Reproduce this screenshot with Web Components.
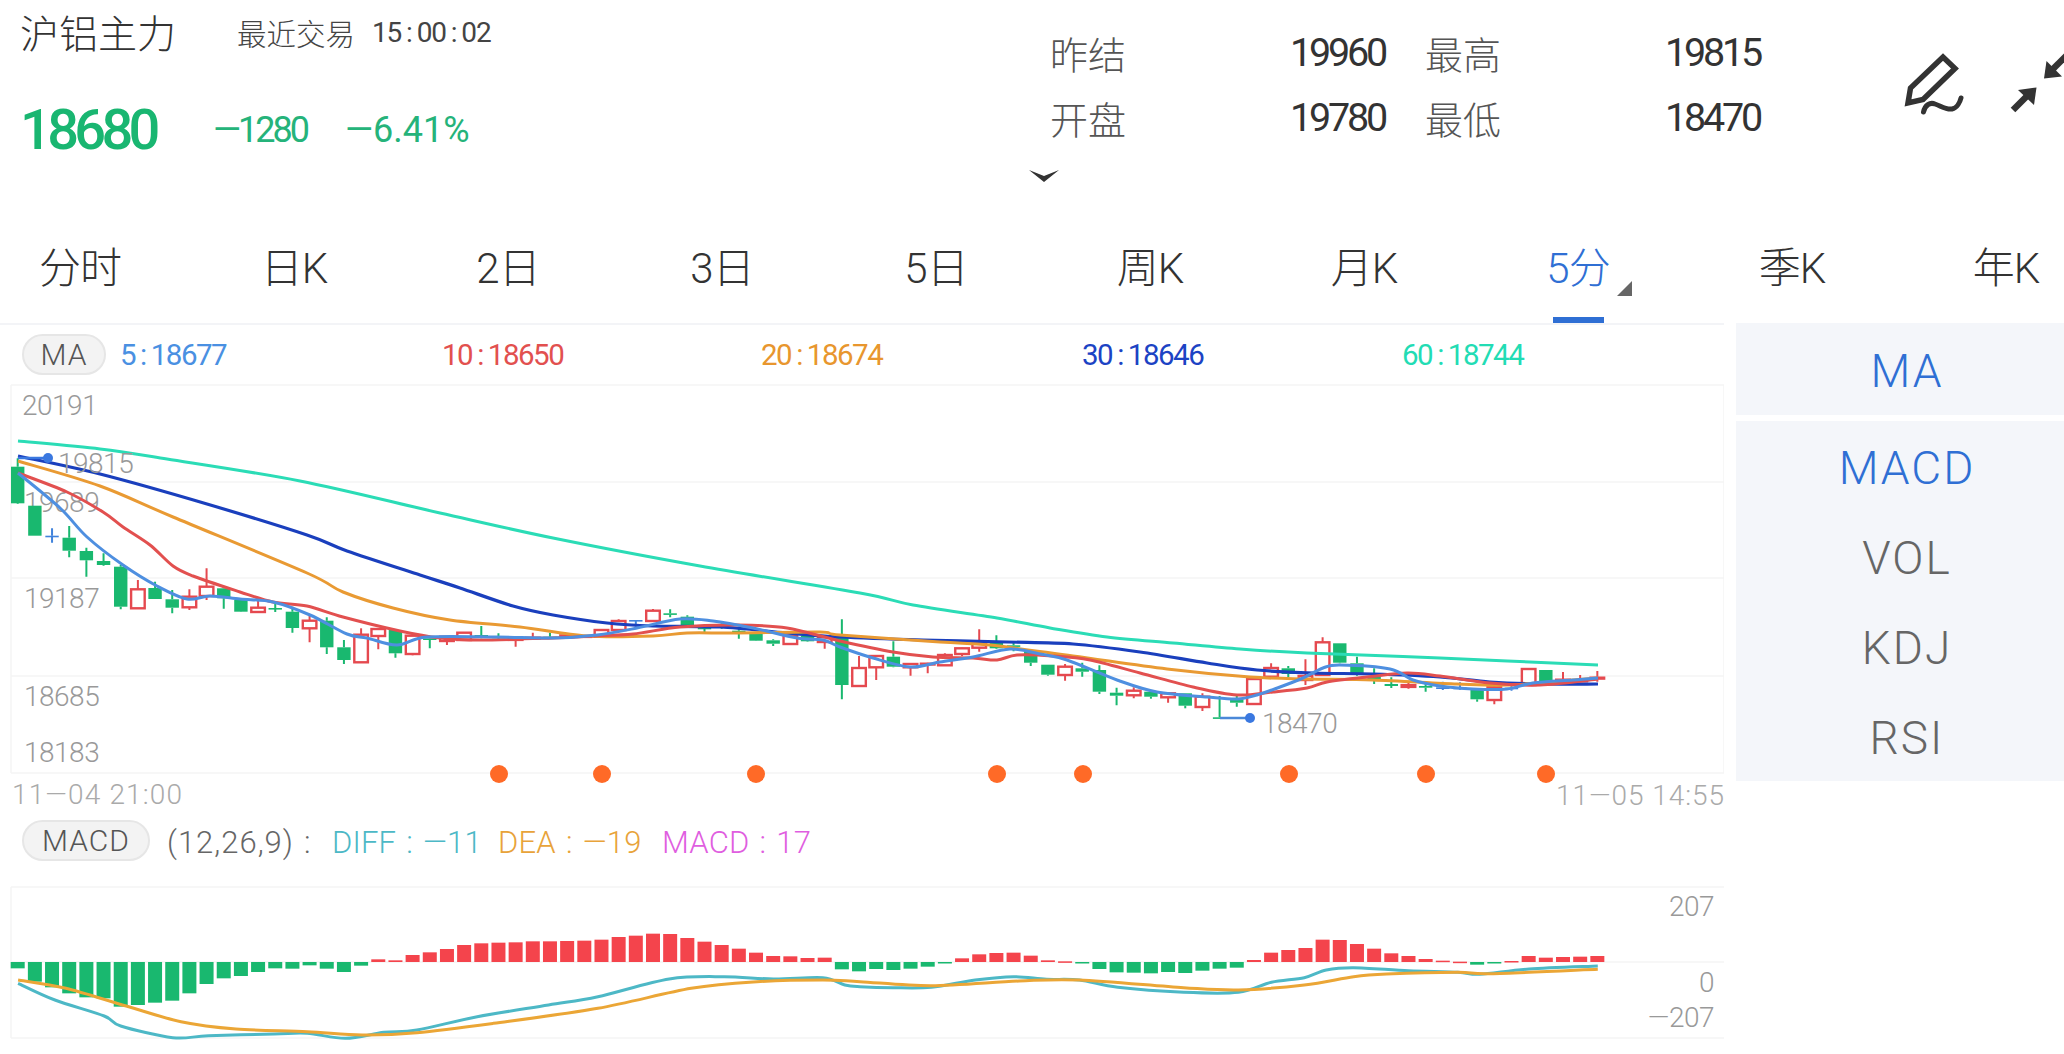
<!DOCTYPE html>
<html lang="zh-CN"><head><meta charset="utf-8"><title>沪铝主力</title>
<style>
html,body{margin:0;padding:0;background:#fff;height:1054px;overflow:hidden}
body{font-family:Roboto,"Noto Sans CJK SC",sans-serif;color:#333}
</style></head><body>
<quote-app></quote-app>
<script>
function el(name,html,css){
  customElements.define(name,class extends HTMLElement{
    constructor(){super();const r=this.attachShadow({mode:'open'});
      r.innerHTML='<style>'+css+'</style>'+(typeof html==='function'?html(this):html);}
  });
}
const col='<span style="display:inline-block;margin:0 5px">:</span>';
const col2='<span style="display:inline-block;margin:0 10px">:</span>';

el('quote-header',`
<div class="left">
  <div class="name"><span class="title">沪铝主力</span><span class="trade">最近交易</span><span class="time">15${col}00${col}02</span></div>
  <div class="price"><span class="p">18680</span><span class="d">—1280</span><span class="pc">—6.41%</span></div>
</div>
<div class="stats">
  <div class="grid">
    <span class="l">昨结</span><span class="v">19960</span><span class="l">最高</span><span class="v">19815</span>
    <span class="l">开盘</span><span class="v">19780</span><span class="l">最低</span><span class="v">18470</span>
  </div>
  <svg class="chev" width="30" height="12" viewBox="0 0 30 12"><path d="M0 0 L15 6 L30 0 L15 12Z" fill="#333"/></svg>
</div>
<svg class="tools" width="174" height="90" viewBox="1890 40 174 90">
  <path d="M1908 103 L1910.5 88 L1943 57 L1955 68.500 L1923 99.500Z" fill="none" stroke="#333" stroke-width="5.500" stroke-linejoin="miter"/>
  <path d="M1923.500 112 C1925 105 1930 102 1935 104 C1941 106 1946 110 1952 109 C1957 108 1960 102 1961 98" fill="none" stroke="#333" stroke-width="5" stroke-linecap="round"/>
  <path d="M2013 110 L2028 95" stroke="#333" stroke-width="6.500"/>
  <path d="M2018 90 L2036.500 87.500 L2034 105Z" fill="#333"/>
  <path d="M2051 71 L2070 52" stroke="#333" stroke-width="6.500"/>
  <path d="M2046.500 61 L2044 78.500 L2062 76.500Z" fill="#333"/>
</svg>`,`
:host{display:flex;height:222px;position:relative}
.left{padding-left:20px;flex:none;width:1031px}
.name{display:flex;align-items:center;height:66px;margin-top:-2px}
.title{font-size:39px;width:217px;color:#333;font-weight:300}
.trade{font-size:29.500px;color:#444;width:135px;font-weight:300;padding-top:2px}
.time{font-size:28px;color:#444;letter-spacing:-1.200px;display:inline-block;padding-top:2px}
.price{display:flex;align-items:center;height:60px;margin-top:36px;color:#19b671}
.p{font-size:56px;letter-spacing:-4.700px;width:193px;font-weight:500}
.d{font-size:36px;width:132px;letter-spacing:-3px;color:#25b37a}
.pc{font-size:36px;letter-spacing:0;color:#25b37a}
.stats{flex:none;width:855px;margin-left:-1px;padding-top:20px;box-sizing:border-box}
.grid{display:grid;grid-template-columns:240px 135px 240px 1fr;grid-auto-rows:65px;align-items:center}
.l{font-size:38px;color:#555;font-weight:300}
.v{font-size:39.500px;color:#333;letter-spacing:-3.200px}
.chev{display:block;margin:20px 0 0 -21px}
.tools{flex:none;margin-top:40px;margin-left:-15px}`);

el('period-tab',`<slot></slot><i class="tri"></i><b class="bar"></b>`,`
:host{flex:none;width:214px;height:101px;display:flex;align-items:center;justify-content:center;position:relative;font-size:42px;letter-spacing:-1px;color:#333;font-weight:300;padding-bottom:17px;box-sizing:border-box}
.tri,.bar{display:none;position:absolute}
:host([active]){color:#2f6fd4}
:host([active]) .bar{display:block;left:82px;width:51px;height:6px;bottom:0;background:#2f6fd4}
:host([active]) .tri{display:block;left:146px;top:59px;width:0;height:0;border-left:15px solid transparent;border-bottom:15px solid #666}`);

el('period-tabs',`<slot></slot>`,`:host{display:flex;margin-left:-27px;width:2140px}`);

el('tag-pill',`<slot></slot>`,`
:host{display:inline-flex;align-items:center;justify-content:center;box-sizing:border-box;height:41px;border:2px solid #e6e6e6;background:#f3f3f3;border-radius:21px;font-size:30px;color:#555;font-weight:300;letter-spacing:1px;flex:none}`);

el('ma-legend',`
<tag-pill style="width:84px;margin-right:14px">MA</tag-pill>
<span style="width:322px;color:#4a90e2">5${col}18677</span>
<span style="width:319px;color:#e2504f">10${col}18650</span>
<span style="width:321px;color:#e8962e">20${col}18674</span>
<span style="width:320px;color:#1c43c4">30${col}18646</span>
<span style="color:#22dcb4">60${col}18744</span>`,`
:host{display:flex;align-items:center;padding:9px 0 5px 22px;border-top:2px solid #f3f4f7;font-size:29.500px;letter-spacing:-1.500px}
span{display:block}`);

el('macd-legend',`
<tag-pill style="width:128px;margin-right:17px">MACD</tag-pill>
<span style="width:165px;color:#666;letter-spacing:1px">(12,26,9)${col2}</span>
<span style="width:166px;color:#4cb8c6">DIFF${col2}—11</span>
<span style="width:164px;color:#e8a33a">DEA${col2}—19</span>
<span style="color:#df5ee0">MACD${col2}17</span>`,`
:host{display:flex;align-items:center;padding:10px 0 9px 22px;font-size:31px;letter-spacing:.2px;font-weight:300;height:41px}
span{display:block;white-space:nowrap;padding-top:2px}
tag-pill{padding-top:0}`);

el('side-item',`<slot></slot>`,`
:host{display:flex;align-items:center;justify-content:center;height:90px;font-size:46px;letter-spacing:2px;color:#666;font-weight:300;padding:3px 0 0 14px;box-sizing:border-box}
:host([active]){color:#2f6fd4}`);

el('indicator-side',`
<div class="box one"><side-item active>MA</side-item></div>
<div class="box two"><side-item active>MACD</side-item><side-item>VOL</side-item><side-item>KDJ</side-item><side-item>RSI</side-item></div>`,`
:host{display:block;width:328px;flex:none;margin-left:12px}
.box{background:#f4f6fa}
.one{height:92px;display:flex;align-items:center;justify-content:center;margin-bottom:6px}
.one side-item{width:100%}
.two{height:360px}`);

/* ---------- chart helpers ---------- */
const X=i=>17.7+17.17*i;
function smooth(p){
  let d='M'+p[0][0].toFixed(1)+' '+p[0][1].toFixed(1);
  for(let i=0;i<p.length-1;i++){
    const a=p[i-1]||p[i],b=p[i],c=p[i+1],e=p[i+2]||c;
    const t=.16;
    d+=' C'+(b[0]+(c[0]-a[0])*t).toFixed(1)+' '+(b[1]+(c[1]-a[1])*t).toFixed(1)+' '+(c[0]-(e[0]-b[0])*t).toFixed(1)+' '+(c[1]-(e[1]-b[1])*t).toFixed(1)+' '+c[0]+' '+c[1];
  }
  return d;
}
const line=(p,c,w=3)=>`<path d="${smooth(p)}" fill="none" stroke="${c}" stroke-width="${w}" stroke-linejoin="round"/>`;
const label=(x,y,t,o='')=>`<text x="${x}" y="${y}" dominant-baseline="central" ${o}>${t}</text>`;

const G='#19b86f',R='#e5494f',B='#4183dc';
const gA=[['g',235,260,370,372],['g',377,377,467,467],['b',445,467,469,488],['g',438,473,512,532],['g',503,513,541,590],['g',520,543,555,557],['g',555,560,680,688],['r',600,628,685,685],['g',605,624,657,657],['g',630,658,683,700],['r',628,650,682,690],['r',565,620,648,660],['g',622,625,655,686],['g',660,660,695,696],['r',655,683,696,696],['g',672,684,686,696],['g',680,695,744,758],['r',708,722,745,787],['g',712,722,802,822],['g',780,802,840,852],['r',745,764,847,847],['r',745,747,768,808],['g',748,750,820,833],['r',767,767,822,826],['g',770,775,780,805]];
const gB=[['r',288,290,303,315],['r',278,278,300,300],['g',258,285,292,295],['g',280,290,293,296],['r',295,296,300,320],['r',278,292,296,298],['g',278,290,292,294],['r',283,285,292,294],['r',285,287,291,293],['r',268,270,290,290],['r',238,243,270,272],['b',240,240,243,260],['r',207,212,243,243],['g',208,220,224,232],['g',226,230,260,262],['g',262,263,266,280],['g',250,255,264,266],['g',260,272,278,296],['g',278,280,302,303],['g',298,301,311,318],['r',285,287,312,314],['g',286,288,304,305],['r',288,292,306,326]];
const gC=[['g',118,170,315,358],['r',228,264,318,320],['r',226,228,262,300],['g',184,230,260,262],['r',250,252,262,287],['r',248,250,252,280],['r',220,225,256,258],['r',203,205,222,228],['r',148,190,203,215],['g',166,188,205,207],['g',188,196,198,214],['g',216,216,248,258],['g',254,254,284,287],['r',252,260,285,302],['g',248,265,275,290],['g',256,270,335,342],['g',323,338,347,376],['r',322,332,346,355],['g',335,335,350,356],['r',336,340,352,368],['g',340,340,377,385],['r',340,350,381,393],['g',348,412,414,414],['g',345,358,368,380],['r',295,297,372,374],['r',250,264,290,292]];
const gD=[['g',198,205,222,232],['r',178,228,240,255],['r',112,127,225,227],['g',130,130,188,190],['g',170,190,225,227],['g',205,230,240,252],['g',232,252,258,264],['r',243,254,262,266],['g',250,258,263,275],['b',245,262,267,270],['b',247,262,268,270],['g',268,268,298,305],['r',255,262,300,313],['b',258,263,268,272],['r',207,207,255,257],['g',210,210,245,247],['r',216,238,245,247],['r',225,240,245,247],['r',213,232,237,245]];
const candles=[...gA.map(c=>[c,380]),...gB.map(c=>[c,540]),...gC.map(c=>[c,580]),...gD.map(c=>[c,600])];

function candleSvg(){
  return candles.map(([c,b],i)=>{
    const x=X(i),col=c[0]==='g'?G:c[0]==='r'?R:B;
    const y=v=>+(b+v/3).toFixed(1);
    const hi=y(c[1]),t=y(c[2]),bt=y(c[3]),lo=y(c[4]);
    let s=`<path d="M${x} ${hi}V${t}M${x} ${bt}V${lo}" stroke="${col}" stroke-width="2"/>`;
    const h=Math.max(bt-t,1.6);
    if(c[0]==='r') s+=h>3?`<rect x="${x-6.8}" y="${t}" width="13.6" height="${h}" fill="#fff" stroke="${col}" stroke-width="2.400"/>`
                        :`<rect x="${x-8}" y="${t-.8}" width="16" height="${h+1.600}" fill="${col}"/>`;
    else s+=`<rect x="${x-6.7}" y="${t}" width="13.4" height="${h}" fill="${col}"/>`;
    return s;
  }).join('');
}
const ma60=[[18,441],[100,449],[167,459],[300,481],[440,513],[553,538],[700,566],[860,593],[913,605],[997,618],[1050,628],[1107,637],[1173,643],[1240,649],[1307,653],[1440,658],[1598,665]];
const ma30=[[18,456],[100,474],[207,504],[307,535],[347,551],[420,575],[460,588],[513,606],[553,615],[607,623],[653,626],[720,627],[787,633],[840,637],[923,640],[1007,642],[1073,644],[1140,652],[1207,663],[1257,670],[1313,673],[1373,674],[1440,677],[1490,682],[1540,684],[1598,684]];
const ma20=[[18,461],[100,486],[173,517],[307,573],[343,592],[393,608],[450,620],[520,627],[587,636],[653,636],[687,633],[737,633],[820,632],[840,635],[940,642],[990,645],[1073,656],[1167,669],[1250,677],[1307,679],[1373,680],[1457,684],[1507,685],[1573,680],[1598,678]];
const ma10=[[18,473],[67,492],[103,512],[123,527],[150,545],[173,566],[193,576],[240,592],[273,602],[307,606],[343,617],[400,631],[440,638],[480,640],[553,638],[593,636],[633,634],[680,627],[737,625],[787,628],[840,641],[893,652],[933,657],[973,658],[997,660],[1017,655],[1053,656],[1090,660],[1140,673],[1193,687],[1237,695],[1273,692],[1307,688],[1327,682],[1367,677],[1407,673],[1440,676],[1490,683],[1540,685],[1598,679]];
const ma5=[[18,473],[60,508],[87,537],[123,565],[157,586],[187,599],[210,596],[240,599],[273,602],[310,615],[347,634],[367,638],[397,645],[427,637],[497,637],[553,638],[597,635],[637,628],[680,619],[713,621],[753,628],[797,638],[823,640],[840,647],[873,658],[910,667],[940,662],[973,657],[1010,649],[1040,654],[1067,660],[1117,680],[1157,692],[1207,697],[1237,699],[1257,695],[1280,687],[1303,678],[1323,668],[1340,665],[1390,669],[1413,680],[1440,686],[1473,689],[1507,689],[1533,683],[1573,680],[1598,678]];

el('main-chart',()=>{
  const grid=[385,482,578,676,773].map(y=>`<path d="M11 ${y}H1724" stroke="#f5f5f5" stroke-width="1.500"/>`).join('');
  const ax='fill="#999" font-size="28" letter-spacing="-.5"';
  return `<svg width="1724" height="430" viewBox="0 380 1724 430">
  ${grid}<path d="M11 385V773M1724 385V773" stroke="#f5f5f5" stroke-width="1.500"/>
  ${label(22,405,'20191',ax)}${label(24,502,'19689',ax)}${label(24,598,'19187',ax)}${label(24,696,'18685',ax)}${label(24,752,'18183',ax)}
  ${candleSvg()}
  ${line(ma60,'#2bdcb6')}${line(ma30,'#1a3fbd',3.200)}${line(ma20,'#e99a33')}${line(ma10,'#e2504f')}${line(ma5,'#4e8fe0')}
  <path d="M18 458H48" stroke="#3a78e0" stroke-width="2.500"/><circle cx="48" cy="458" r="5" fill="#3a78e0"/>
  ${label(58,463,'19815',ax)}
  <path d="M1220 718H1250" stroke="#4a88d8" stroke-width="2.500"/><circle cx="1250" cy="718" r="5" fill="#3a78e0"/>
  ${label(1262,723,'18470',ax)}
  ${[499,602,756,997,1083,1289,1426,1546].map(x=>`<circle cx="${x}" cy="774" r="9" fill="#ff6a27"/>`).join('')}
  ${label(12,794,'11—04 21:00','fill="#aaa" font-size="28" textLength="170" lengthAdjust="spacing"')}
  ${label(1556,795,'11—05 14:55','fill="#aaa" font-size="28" textLength="168" lengthAdjust="spacing"')}
  </svg>`;
},`:host{display:block;height:430px}svg{display:block}text{font-family:Roboto,sans-serif;font-weight:300}`);

const H=[565,605,622,640,652,655,680,675,668,662,640,612,595,588,576,565,566,556,566,576,557,538,541,525,517,507,495,490,488,487,484,484,483,482,479,471,467,461,462,474,485,495,506,518,528,529,534,533,568,574,567,570,566,560,548,535,523,519,518,527,541,544,550,567,577,578,580,576,579,572,566,563,540,518,510,504,479,480,492,506,520,528,537,542,545,554,550,543,528,533,531,530,528];
const Z=a=>a.map(([x,y])=>[+(x/1.823).toFixed(1),+(780+y/3).toFixed(1)]);
const Z2=a=>a.map(([x,y])=>[+(860+x/1.823).toFixed(1),+(780+y/3).toFixed(1)]);
const diff=[...Z([[33,610],[100,660],[190,708],[220,738],[315,773],[380,767],[500,762],[560,760],[630,775],[700,757],[760,750],[870,710],[1000,675],[1090,650],[1220,597],[1320,590],[1410,597],[1500,593],[1540,615]]),...Z2([[0,620],[60,623],[130,622],[210,600],[280,590],[340,598],[400,600],[470,622],[590,637],[690,637],[750,607],[810,593],[850,570],[900,563],[1000,572],[1090,577],[1130,583],[1220,567],[1345,558]])];
const dea=[...Z([[33,600],[120,625],[230,678],[330,725],[430,747],[560,755],[660,765],[760,758],[900,730],[1090,685],[1260,625],[1380,605],[1500,600]]),...Z2([[0,605],[130,617],[290,603],[400,600],[590,623],[690,630],[810,615],[900,590],[960,582],[1090,577],[1150,581],[1345,568]])];

el('macd-chart',()=>{
  const base=962;
  const bars=H.map((v,i)=>{
    const y=780+v/3,x=X(i)-7;
    const up=v<546;
    const top=up?y:base,h=Math.abs(y-base);
    return `<rect x="${x}" y="${top}" width="14" height="${Math.max(h,1.500)}" fill="${up?'#f4444c':'#19b86f'}"/>`;
  }).join('');
  const ax='fill="#999" font-size="28" letter-spacing="-.5" text-anchor="end"';
  return `<svg width="1724" height="184" viewBox="0 870 1724 184">
  <path d="M11 887H1724M11 962H1724M11 1038H1724M11 887V1038" stroke="#f5f5f5" stroke-width="1.500"/>
  ${bars}${line(diff,'#4db8c6')}${line(dea,'#eba636')}
  ${label(1714,906,'207',ax)}${label(1714,982,'0',ax)}${label(1714,1017,'—207',ax)}
  </svg>`;
},`:host{display:block;height:184px}svg{display:block}text{font-family:Roboto,sans-serif;font-weight:300}`);

el('chart-panel',`<ma-legend></ma-legend><main-chart></main-chart><macd-legend></macd-legend><macd-chart></macd-chart>`,`:host{display:block;width:1724px;flex:none}`);

el('quote-app',`
<quote-header></quote-header>
<period-tabs>
  <period-tab>分时</period-tab><period-tab>日K</period-tab><period-tab>2日</period-tab><period-tab>3日</period-tab><period-tab>5日</period-tab>
  <period-tab>周K</period-tab><period-tab>月K</period-tab><period-tab active>5分</period-tab><period-tab>季K</period-tab><period-tab>年K</period-tab>
</period-tabs>
<div class="main"><chart-panel></chart-panel><indicator-side></indicator-side></div>`,`
:host{display:block;width:2064px;height:1054px;overflow:hidden;background:#fff}
.main{display:flex;height:731px}`);
</script>
</body></html>
